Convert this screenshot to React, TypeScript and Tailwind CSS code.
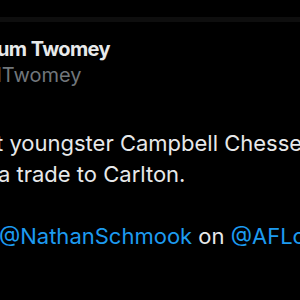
import React from "react";

export default function App() {
  return (
    <div
      className="w-[300px] h-[300px] bg-black overflow-hidden relative"
      style={{ fontFamily: "Inter, 'Noto Sans', sans-serif" }}
    >
      <div className="h-[17px]" />
      <div className="h-[5px] bg-[#0e0e0e]" />
      <div className="h-[15px]" />
      <div className="whitespace-nowrap ml-[-3px]">
        <div className="text-[20px] leading-[24px] font-bold text-[#e7e9ea] tracking-[-0.6px]">
          um Twomey
        </div>
        <div className="text-[20px] leading-[24px] text-[#71767b] mt-[2px] ml-[0px]">
          lTwomey
        </div>
      </div>
      <div className="h-[41px]" />
      <div className="whitespace-nowrap text-[22px] leading-[31px] text-[#e7e9ea] ml-[-4px]">
        <div>t youngster Campbell Chesser</div>
        <div className="ml-[2px]">a trade to Carlton.</div>
        <div className="h-[31px]" />
        <div className="ml-[3px]">
          <span className="text-[#1d9bf0]">@NathanSchmook</span> on{" "}
          <span className="text-[#1d9bf0]">@AFLcom</span>
        </div>
      </div>
    </div>
  );
}
